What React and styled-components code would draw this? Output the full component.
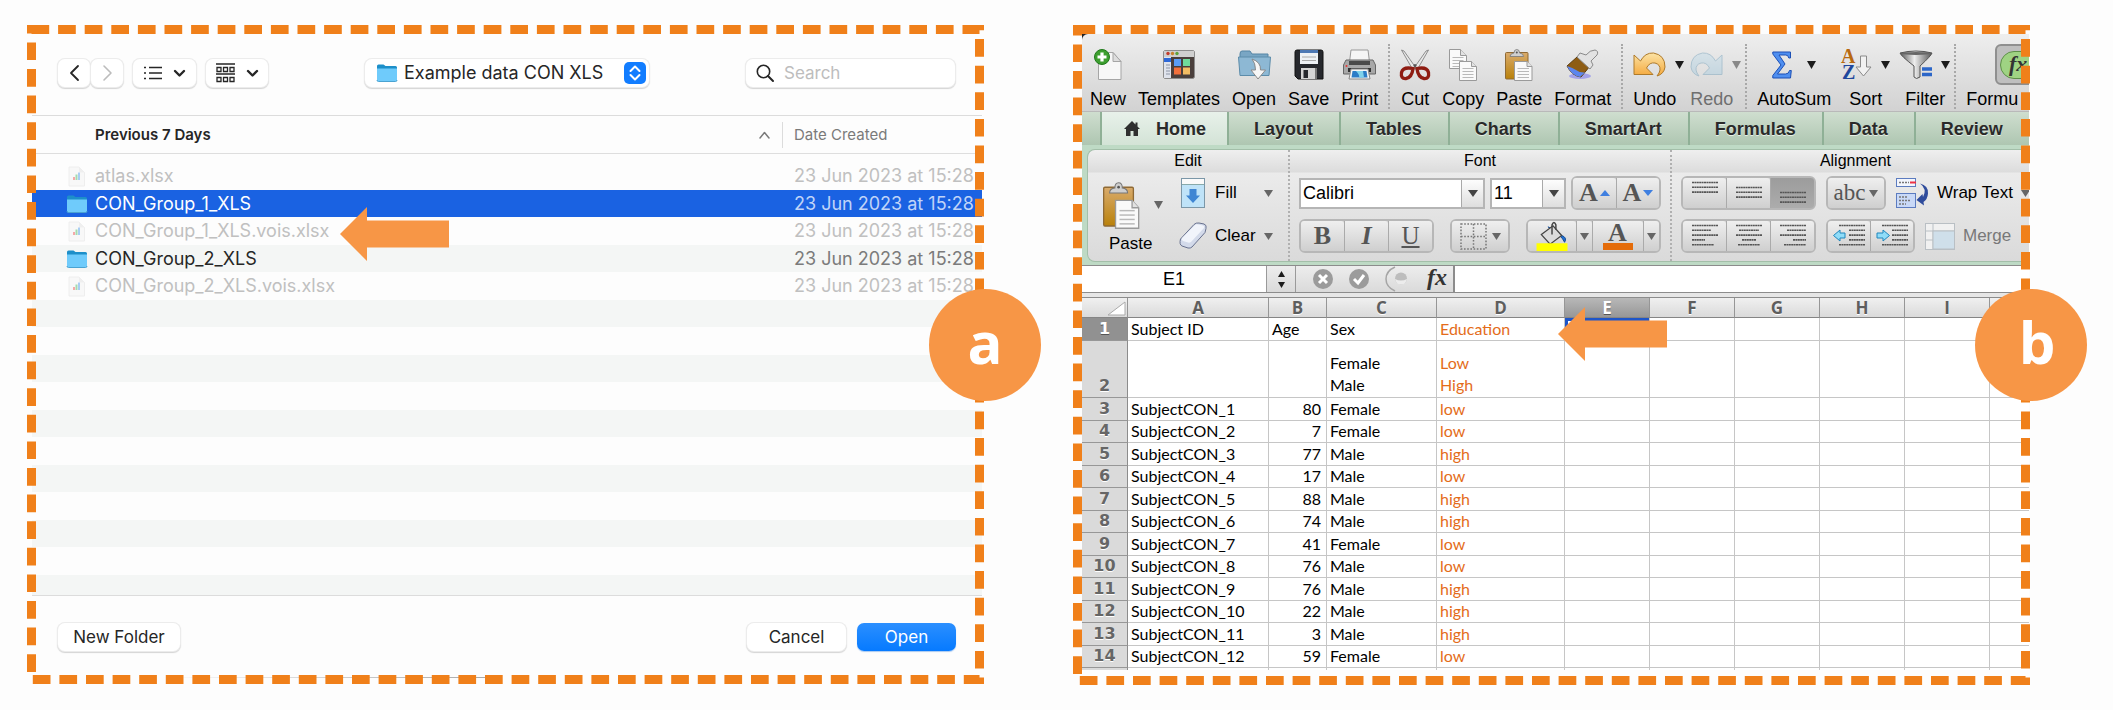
import React from 'react';
import styled, { createGlobalStyle, css } from 'styled-components';

const ORANGE = '#f0801a';
const SOFT_ORANGE = '#f79646';

const GlobalStyle = createGlobalStyle`
  *, *::before, *::after { box-sizing: border-box; }
  body { margin: 0; background: #fdfdfd; }
  button, input, select { font: inherit; color: inherit; margin: 0; padding: 0; }
  button { border: 0; background: none; }
  svg { display: block; flex: none; overflow: visible; }
`;

/* ---------- figure ---------- */

const Figure = styled.main`
  display: grid;
  grid-template-columns: minmax(0, 1fr) minmax(0, 1fr);
  align-items: start;
  gap: 89px;
  padding: 25px 83px 25px 27px;
`;

const Panel = styled.section`
  position: relative;
`;

const DashedFrame = styled.svg`
  position: absolute;
  inset: 0;
  width: 100%;
  height: 100%;
  pointer-events: none;
  rect {
    width: calc(100% - 9px);
    height: calc(100% - 9px);
    fill: none;
    stroke: ${ORANGE};
    stroke-width: 9;
    stroke-dasharray: 17.7 8.9;
  }
`;

const Badge = styled.div`
  position: absolute;
  top: 264px;
  right: -57px;
  width: 112px;
  height: 112px;
  padding-left: ${p => p.$shift || 0}px;
  border-radius: 50%;
  background: ${SOFT_ORANGE};
  color: #fff;
  font: 700 58px/106px "Open Sans", sans-serif;
  text-align: center;
`;

const Pointer = styled.svg`
  position: absolute;
  left: ${p => p.$x}px;
  top: ${p => p.$y}px;
  fill: ${SOFT_ORANGE};
`;

const Frame = () => (
  <DashedFrame aria-hidden="true"><rect x="4.5" y="4.5" /></DashedFrame>
);

const Arrow = ({ x, y }) => (
  <Pointer $x={x} $y={y} width="109" height="54" viewBox="0 0 109 54" aria-hidden="true">
    <path d="M0 27 27 0V13.500H109V40.500H27V54z" />
  </Pointer>
);

/* ---------- open dialog ---------- */

const Dialog = styled.div`
  padding: 9px 2px 9px 5px;
  background: linear-gradient(90deg, transparent 14%, #a8a8a8 48%, transparent 49%) 0 calc(100% - 6px) / 100% 1px no-repeat;
  font: 17px/24px Inter, sans-serif;
  color: #262626;
`;

const DialogBar = styled.div`
  display: flex;
  align-items: center;
  gap: 10px;
  padding: 25px 27px 28px 26px;
  border-bottom: 1px solid #dcdcdc;
`;

const softControl = css`
  height: 28px;
  border-radius: 7px;
  background: #fff;
  box-shadow: 0 0 0 1px #ececec, 0 1px 1px 1px #d4d4d4;
`;

const SoftButton = styled.button`
  ${softControl}
  display: flex;
  align-items: center;
  justify-content: center;
  gap: 12px;
  min-width: ${p => p.$w}px;
  ${p => p.$primary && css`
    color: #fff;
    background: linear-gradient(#2b8fff, #067aff);
    box-shadow: 0 1px 1px #a9c9f0;
  `}
`;

const NavPair = styled.div`
  display: flex;
  gap: 1px;
`;

const Spacer = styled.div`
  flex: 1;
`;

const FolderPicker = styled.label`
  ${softControl}
  display: flex;
  align-items: center;
  width: 284px;
  padding: 0 3px 0 12px;
  gap: 7px;
  select { flex: 1; min-width: 0; border: 0; background: none; appearance: none; font-size: 18px; }
`;

const SearchBox = styled.label`
  ${softControl}
  display: flex;
  align-items: center;
  gap: 10px;
  width: 209px;
  padding: 0 10px;
  input { flex: 1; min-width: 0; border: 0; outline: 0; background: none; font-size: 17px; }
  input::placeholder { color: #bdbdbd; opacity: 1; }
`;

const FileTable = styled.table`
  width: 100%;
  table-layout: fixed;
  border-spacing: 0;
  border-bottom: 1px solid #dcdcdc;
  text-align: left;
  td, th { padding: 0; }
  td { font-size: 18px; }
  th:last-child, td:last-child { width: 199px; padding-left: 11px; white-space: nowrap; }
  tbody::before { content: ''; display: block; height: 8px; }
`;

const HeadCell = styled.th`
  height: 38px;
  border-bottom: 1px solid #dedede;
  font-size: 15px;
  font-weight: ${p => (p.$muted ? 400 : 600)};
  color: ${p => (p.$muted ? '#7a7a7a' : '#262626')};
`;

const HeadSplit = styled.div`
  display: flex;
  align-items: center;
  justify-content: space-between;
  height: 26px;
  padding: 0 12px 0 63px;
  border-right: 1px solid #dcdcdc;
`;

const FileRow = styled.tr`
  height: ${p => p.$h}px;
  background: ${p => (p.$selected ? '#1a62e2' : p.$striped ? '#f4f6f5' : 'transparent')};
  color: ${p => (p.$selected ? '#fff' : p.$dim ? '#c0c0c0' : '#262626')};
  td:last-child { color: ${p => (p.$selected ? '#c0d4f8' : p.$dim ? '#c0c0c0' : '#7b7b7b')}; }
`;

const FileName = styled.div`
  display: flex;
  align-items: center;
  gap: 8px;
  padding-left: 35px;
`;

const DialogFoot = styled.div`
  display: flex;
  gap: 11px;
  padding: 27px 26px 24px;
`;

const Folder = () => (
  <svg width="20" height="20" viewBox="0 0 20 20" aria-hidden="true">
    <path d="M0 3q0-1.500 1.500-1.500h5l2 1.500h10q1.500 0 1.500 1.500V8H0z" fill="#1d8fc9" />
    <path d="M0 5.500h20V17q0 1.500-1.500 1.500h-17Q0 18.500 0 17z" fill="#6fcbfb" />
    <path d="M0 17q0 1.500 1.500 1.500h17Q20 18.500 20 17" fill="none" stroke="#4aa3d2" />
  </svg>
);

const SheetFile = () => (
  <svg width="20" height="21" viewBox="0 0 20 21" aria-hidden="true">
    <path d="M2 1h10l5.500 5.500V20H2z" fill="#f8f8f8" stroke="#eee" />
    <path d="M12 1v5.500h5.500" fill="#efefef" />
    <path d="M7 14v-3" stroke="#f5a9a9" strokeWidth="2" />
    <path d="M9.500 14V8.500" stroke="#a5dcb0" strokeWidth="2" />
    <path d="M12 14V6.500" stroke="#a9cdf3" strokeWidth="2" />
  </svg>
);

const Chevron = ({ d = 'M1 1l4.500 4.500L10 1', w = 11, h = 7, color = '#262626', sw = 2.4 }) => (
  <svg width={w} height={h} viewBox={`0 0 ${w} ${h}`} fill="none" stroke={color} strokeWidth={sw} strokeLinecap="round" strokeLinejoin="round" aria-hidden="true">
    <path d={d} />
  </svg>
);

const files = [
  { name: 'atlas.xlsx', dim: true },
  { name: 'CON_Group_1_XLS', folder: true, selected: true },
  { name: 'CON_Group_1_XLS.vois.xlsx', dim: true },
  { name: 'CON_Group_2_XLS', folder: true },
  { name: 'CON_Group_2_XLS.vois.xlsx', dim: true },
];
const blankRows = [27, 28, 27, 28, 27, 28, 27, 28, 27, 28, 20];

const OpenDialog = () => (
  <Dialog>
    <DialogBar>
      <NavPair>
        <SoftButton $w={32} aria-label="Back"><Chevron d="M8 1 1 8l7 7" w={9} h={16} sw={1.8} /></SoftButton>
        <SoftButton $w={32} aria-label="Forward"><Chevron d="M1 1l7 7-7 7" w={9} h={16} sw={1.6} color="#bcbcbc" /></SoftButton>
      </NavPair>
      <SoftButton $w={63} aria-label="List view">
        <svg width="18" height="14" viewBox="0 0 18 14" stroke="#262626" strokeWidth="1.500" aria-hidden="true">
          <path d="M0 1.500h2M0 7h2M0 12.500h2M5 1.500h13M5 7h13M5 12.500h13" />
        </svg>
        <Chevron />
      </SoftButton>
      <SoftButton $w={62} aria-label="Group by">
        <svg width="19" height="20" viewBox="0 0 19 20" fill="none" stroke="#262626" strokeWidth="1.300" aria-hidden="true">
          <path d="M0 1h19M0 11h19" />
          <path d="M1 4.500h4v4H1zM7.500 4.500h4v4h-4zM14 4.500h4v4h-4zM1 14.500h4v4H1zM7.500 14.500h4v4h-4zM14 14.500h4v4h-4z" />
        </svg>
        <Chevron />
      </SoftButton>
      <Spacer />
      <FolderPicker>
        <Folder />
        <select aria-label="Folder" defaultValue="x"><option value="x">Example data CON XLS</option></select>
        <svg width="22" height="22" viewBox="0 0 22 22" aria-hidden="true">
          <rect width="22" height="22" rx="5" fill="#127dff" />
          <path d="M6.500 9 11 4.500 15.500 9M6.500 13l4.500 4.500L15.500 13" fill="none" stroke="#fff" strokeWidth="2" strokeLinecap="round" strokeLinejoin="round" />
        </svg>
      </FolderPicker>
      <Spacer />
      <SearchBox>
        <svg width="18" height="18" viewBox="0 0 18 18" fill="none" stroke="#262626" strokeWidth="1.600" strokeLinecap="round" aria-hidden="true">
          <circle cx="7.500" cy="7.500" r="6.200" /><path d="M12 12l5 5" strokeWidth="2" />
        </svg>
        <input aria-label="Search" placeholder="Search" />
      </SearchBox>
    </DialogBar>
    <FileTable>
      <thead>
        <tr>
          <HeadCell scope="col">
            <HeadSplit>Previous 7 Days<Chevron d="M1 7 5.500 1.500 10 7" h={8} sw={1.5} color="#7a7a7a" /></HeadSplit>
          </HeadCell>
          <HeadCell scope="col" $muted>Date Created</HeadCell>
        </tr>
      </thead>
      <tbody>
        {files.map((f, i) => (
          <FileRow key={f.name} $h={i % 2 ? 27 : 28} $striped={i % 2 === 1} $selected={f.selected} $dim={f.dim}>
            <td><FileName>{f.folder ? <Folder /> : <SheetFile />}{f.name}</FileName></td>
            <td>23 Jun 2023 at 15:28</td>
          </FileRow>
        ))}
        {blankRows.map((h, i) => (
          <FileRow key={i} $h={h} $striped={i % 2 === 0}><td /><td /></FileRow>
        ))}
      </tbody>
    </FileTable>
    <DialogFoot>
      <SoftButton $w={122}>New Folder</SoftButton>
      <Spacer />
      <SoftButton $w={99}>Cancel</SoftButton>
      <SoftButton $w={99} $primary>Open</SoftButton>
    </DialogFoot>
  </Dialog>
);

/* ---------- spreadsheet window ---------- */

const WindowPad = styled.div`
  padding: 9px 1px 15px 9px;
`;

const Window = styled.div`
  overflow: hidden;
  background: #222;
  color: #000;
  font: 18px/24px "Liberation Sans", Arial, sans-serif;
`;

const Toolbar = styled.div`
  display: flex;
  padding: 10px 0 0 8px;
  height: 78px;
  border-bottom: 1px solid #b9b9b9;
  border-top-left-radius: 6px;
  background: linear-gradient(#eeeeee, #d2d2d2);
`;

const ToolGroup = styled.div`
  display: flex;
  flex: none;
  align-items: flex-start;
  gap: ${p => p.$gap}px;
  padding-right: ${p => (p.$tight ? 4 : 10)}px;
  & + & {
    padding-left: 10px;
    border-left: 2px dotted #a8a8a8;
  }
  height: 65px;
`;

const Tool = styled.button`
  display: flex;
  flex-direction: column;
  align-items: ${p => (p.$start ? 'flex-start' : 'center')};
  gap: 2px;
  color: ${p => (p.$off ? '#6f6f6f' : '#000')};
  line-height: 24px;
  white-space: nowrap;
`;

const ToolIcon = styled.span`
  display: flex;
  align-items: center;
  gap: ${p => p.$gap || 9}px;
  height: 41px;
  opacity: ${p => (p.$off ? 0.45 : 1)};
`;

const FormulaTile = styled.span`
  display: flex;
  align-items: center;
  justify-content: center;
  width: 56px;
  height: 41px;
  margin-left: 29px;
  border: 2px solid #8f8f8f;
  border-radius: 6px;
  background: #bfbfbf;
`;

const Tabs = styled.nav`
  display: flex;
  height: 33px;
  padding-left: 18px;
  background: linear-gradient(#cfdecf, #aec6b1);
`;

const Tab = styled.a`
  display: flex;
  flex: none;
  align-items: center;
  gap: 16px;
  padding: 0 26px 0 25px;
  border-left: 2px solid #8fb096;
  color: #2a2a2a;
  font-weight: 700;
  text-decoration: none;
  text-shadow: 0 1px 0 #e6efe6;
  ${p => p.$active && css`
    padding: 0 21px 0 22px;
    background: linear-gradient(#e8f1ea, #d3e3d6);
  `}
`;

const RibbonFrame = styled.div`
  padding: 4px 0 3px 5px;
  background: #bedac5;
`;

const Ribbon = styled.div`
  display: flex;
  height: 113px;
  border: 1px solid #a3bfa9;
  border-right: 0;
  border-radius: 8px 0 0 8px;
  background: linear-gradient(#efefef, #dcdcdc 22px, #ebebeb 23px, #dadada);
  font-size: 17px;
`;

const RibbonGroup = styled.section`
  flex: none;
  padding: 0 ${p => p.$pad}px;
  & + & { border-left: 2px dotted #b0b0b0; }
  h3 { margin: 0; font: 16px/21px "Liberation Sans", Arial, sans-serif; text-align: center; }
`;

const RibbonRows = styled.div`
  display: flex;
  flex-direction: column;
  gap: 9px;
  padding-top: 5px;
`;

const RibbonRow = styled.div`
  display: flex;
  align-items: center;
  justify-content: ${p => (p.$spread ? 'space-between' : 'flex-start')};
  gap: ${p => p.$gap || 0}px;
  height: 34px;
`;

const EditBody = styled.div`
  display: flex;
  gap: 16px;
`;

const BigTool = styled.button`
  display: flex;
  flex-direction: column;
  align-items: flex-start;
  padding-top: 7px;
  line-height: 24px;
  span { padding-left: 6px; }
`;

const BigIcon = styled.div`
  display: flex;
  align-items: center;
  gap: 14px;
  height: 54px;
`;

const LineTool = styled.button`
  display: flex;
  align-items: center;
  gap: 8px;
  white-space: nowrap;
  color: ${p => (p.$off ? '#787878' : '#000')};
`;

const LineLabel = styled.span`
  min-width: ${p => p.$min || 0}px;
  text-align: left;
`;

const Picker = styled.label`
  display: flex;
  position: relative;
  width: ${p => p.$w}px;
  height: 31px;
  border: 2px solid #b5b5b5;
  background: #fff;
  font-size: 18px;
  select { width: 100%; padding: 0 2px; border: 0; background: none; appearance: none; }
  span {
    position: absolute;
    inset: 0 0 0 auto;
    display: flex;
    align-items: center;
    justify-content: center;
    width: 22px;
    border-left: 1px solid #a9a9a9;
    background: linear-gradient(#fdfdfd, #dedede);
    pointer-events: none;
  }
`;

const Cluster = styled.div`
  display: flex;
  flex: none;
  height: 34px;
  border: 2px solid #b7b7b7;
  border-radius: 6px;
  background: #cfcfcf;
`;

const ClusterButton = styled.button`
  display: flex;
  align-items: center;
  justify-content: center;
  gap: ${p => p.$gap || 5}px;
  width: ${p => p.$w}px;
  border-radius: 3px;
  background: ${p => (p.$pressed ? 'linear-gradient(#9c9c9c, #acacac)' : 'linear-gradient(#efefef, #cfcfcf)')};
  color: #555;
  font: ${p => p.$font || '700 26px'}/30px "Liberation Serif", serif;
  font-style: ${p => (p.$italic ? 'italic' : 'normal')};
  text-decoration: ${p => (p.$under ? 'underline' : 'none')};
  & + & { border-left: 1px solid #aaa; border-top-left-radius: 0; border-bottom-left-radius: 0; }
`;

const Caret = ({ w = 9, h = 8, color = '#1c1c1c', up }) => (
  <svg width={w} height={h} viewBox="0 0 10 8" preserveAspectRatio="none" fill={color} aria-hidden="true">
    <path d={up ? 'M0 8h10L5 0z' : 'M0 0h10L5 8z'} />
  </svg>
);

const Home = () => (
  <svg width="16" height="15" viewBox="0 0 16 15" fill="#2f2f2f" aria-hidden="true">
    <path d="M8 0 0 8h2v7h4.500v-5h3v5H14V8h2l-2.500-2.500V1.500h-2v2z" />
  </svg>
);

const NewIcon = () => (
  <svg width="28" height="32" viewBox="0 0 28 32" aria-hidden="true">
    <path d="M4.500 3.500H19l8 9V30.500H4.500z" fill="#f7f7f7" stroke="#a5a5a5" />
    <path d="M19 3.500v9h8z" fill="#ddd" stroke="#a5a5a5" />
    <circle cx="8" cy="8" r="7.500" fill="#3d9e2f" stroke="#1f7a1a" />
    <path d="M8 3.500v9M3.500 8h9" stroke="#fff" strokeWidth="3.200" />
  </svg>
);

const TemplatesIcon = () => (
  <svg width="32" height="29" viewBox="0 0 32 29" aria-hidden="true">
    <rect x=".5" y=".5" width="31" height="28" rx="2" fill="#4a3f3c" stroke="#8c8c8c" />
    <rect x="1" y="1" width="30" height="6" fill="#cfcfcf" />
    <circle cx="5" cy="3.500" r="1.700" fill="#c33b2c" /><circle cx="9.500" cy="3.500" r="1.700" fill="#c9822b" /><circle cx="14" cy="3.500" r="1.700" fill="#5ea33b" />
    <rect x="1" y="7" width="7" height="21" fill="#dfe3ec" /><rect x="1" y="8" width="7" height="4" fill="#2d68d8" />
    <path d="M3 15h4M3 18h4M3 21h4M3 24h4" stroke="#8d95a6" />
    <rect x="11" y="9" width="7" height="7" fill="#5a9cf5" /><rect x="20" y="9" width="7" height="7" fill="#6edb9b" />
    <rect x="11" y="17.500" width="7" height="7" fill="#f2703c" /><rect x="20" y="17.500" width="7" height="7" fill="#f3bd63" />
  </svg>
);

const OpenIcon = () => (
  <svg width="33" height="32" viewBox="0 0 33 32" aria-hidden="true">
    <path d="M2 5q0-3 2-3h8l2 3h16v5H2z" fill="#79a6c4" stroke="#5585a5" />
    <path d="M.5 8h32l-1.500 18.500h-29z" fill="#8db8d4" stroke="#5c8caa" />
    <path d="M14 10q9 3 8.500 11h5L20 30l-7-9h4.500q0-7-3.500-11z" fill="#f6f6f6" stroke="#8a8a8a" />
  </svg>
);

const SaveIcon = () => (
  <svg width="30" height="31" viewBox="0 0 30 31" aria-hidden="true">
    <path d="M1 3q0-2 2-2h24q2 0 2 2v27H4l-3-3z" fill="#26282d" stroke="#111" />
    <rect x="6" y="1" width="18" height="14" fill="#eef1f5" /><rect x="6" y="1" width="18" height="3" fill="#4d78b4" />
    <path d="M8 8h14M8 11.500h14" stroke="#aaa" />
    <rect x="7" y="19" width="15" height="11" fill="#d5d5d5" /><rect x="9.500" y="21" width="4.500" height="8" fill="#26282d" />
    <path d="M22 19v11" stroke="#777" strokeWidth="2" />
  </svg>
);

const PrintIcon = () => (
  <svg width="33" height="31" viewBox="0 0 33 31" aria-hidden="true">
    <path d="M8 1h17l1.500 12h-20z" fill="#f5f5f5" stroke="#999" />
    <path d="M3 11h27l2.500 5v9h-32v-9z" fill="#a8a8a8" stroke="#666" />
    <rect x="6" y="12" width="21" height="4" fill="#4a4a4a" />
    <rect x="5" y="19" width="23" height="4" fill="#333" />
    <path d="M8 20h17l2 10H6z" fill="#f5f5f5" stroke="#888" />
    <path d="M9.500 22h14l1 6.500h-16z" fill="#2b7cc7" /><path d="M13 22q4 4 3 6.500h5l-1-6.500z" fill="#7fd2ea" />
    <circle cx="3.500" cy="17" r="1" fill="#e33" />
  </svg>
);

const CutIcon = () => (
  <svg width="30" height="32" viewBox="0 0 30 32" fill="none" aria-hidden="true">
    <path d="M1.500 1 4 2l12 17-3 2zM28.500 1 26 2 14 19l3 2z" fill="#e8e8e8" stroke="#8d8d8d" />
    <path d="M13 19.500q-10-2-11.500 4Q.5 30 6 29.500 12 28.500 13 19.500zM17 19.500q10-2 11.500 4 1 6.500-4.500 6Q18 28.500 17 19.500z" stroke="#8e1c12" strokeWidth="3.300" />
    <circle cx="15" cy="16.500" r="1.500" fill="#555" />
  </svg>
);

const PageShape = ({ x, y, w, h, c }) => (
  <g transform={`translate(${x} ${y})`}>
    <path d={`M0 0h${w - c}l${c} ${c}V${h}H0z`} fill="#fafafa" stroke="#9a9a9a" />
    <path d={`M${w - c} 0v${c}h${c}`} fill="#e2e2e2" stroke="#9a9a9a" />
    {[0, 1, 2, 3].map(i => (
      <path key={i} d={`M3 ${c + 2 + i * 3}h${w - 6}`} stroke="#b9b9b9" />
    ))}
  </g>
);

const CopyIcon = () => (
  <svg width="28" height="32" viewBox="0 0 28 32" aria-hidden="true">
    <PageShape x={0.5} y={0.5} w={17} h={19} c={6} /><PageShape x={10.5} y={12.5} w={17} h={19} c={5} />
  </svg>
);

const PasteArt = ({ w, h }) => (
  <svg width={w} height={h} viewBox="0 0 28 32" preserveAspectRatio="none" aria-hidden="true">
    <defs>
      <linearGradient id="board" x2="0" y2="1"><stop stopColor="#d9ab6c" /><stop offset="1" stopColor="#b9810a" /></linearGradient>
    </defs>
    <rect x=".5" y="3.500" width="22.500" height="26.500" rx="1" fill="url(#board)" stroke="#8f6a35" />
    <path d="M5 7.500q0-3 4-3.500 0-3.500 2.800-3.500T14.600 4q4 .5 4 3.500z" fill="#cfcfcf" stroke="#777" strokeWidth=".8" />
    <circle cx="11.800" cy="3.500" r="1" fill="#555" />
    <PageShape x={9.5} y={12.5} w={17.5} h={19} c={5} />
  </svg>
);

const FormatIcon = () => (
  <svg width="34" height="31" viewBox="0 0 34 31" aria-hidden="true">
    <ellipse cx="14" cy="27" rx="11" ry="3" fill="#7b7bf0" opacity=".6" />
    <path d="M11 8 24 17 15 28Q6 27 1 17z" fill="#8e5d14" stroke="#5f3f10" />
    <path d="M1 17q6 2 9 4 4 3 9 2.500L14 28Q5 26 1 17z" fill="#5c86ee" />
    <path d="M11 8l3-4 6 2q4-5 9-5 4 1 2 5l-6 6 2 4-3 4z" fill="#e2e2e2" stroke="#8a8a8a" />
  </svg>
);

const TurnIcon = ({ flip, a, b, stroke }) => (
  <svg width="33" height="25" viewBox="0 0 33 25" aria-hidden="true">
    <defs>
      <linearGradient id={flip ? 'turnR' : 'turnU'} x2="0" y2="1"><stop stopColor={a} /><stop offset="1" stopColor={b} /></linearGradient>
    </defs>
    <path transform={flip ? 'translate(33 0) scale(-1 1)' : undefined}
      d="M1 3v19.500h19l-6.500-6.500q3-6 8.500-5 5.500 1.500 5 7-.5 3-3 6 7-2 8-9 0-12-11.500-14Q12 .5 7.500 9z"
      fill={`url(#${flip ? 'turnR' : 'turnU'})`} stroke={stroke} />
  </svg>
);

const SigmaIcon = () => (
  <svg width="20" height="28" viewBox="0 0 20 28" aria-hidden="true">
    <path d="M.8 1h17.700v6h-1.700q-.5-3-3-3H7l6 9-7.500 10h8q3.500 0 4-3.500h1.800L18.500 27H.8v-2.500L9 14 .8 3z" fill="#4f8ff0" stroke="#1c4fb5" />
  </svg>
);

const LetterMark = styled.text`
  font: 700 ${p => p.$size}px "Liberation Serif", serif;
  font-style: ${p => (p.$italic ? 'italic' : 'normal')};
`;

const SortIcon = () => (
  <svg width="31" height="32" viewBox="0 0 31 32" aria-hidden="true">
    <LetterMark $size={20} x="0" y="14" fill="#b8690f">A</LetterMark>
    <LetterMark $size={20} x="1" y="30" fill="#1f479c">Z</LetterMark>
    <path d="M19.500 7h6v11H30l-7.500 9-7.500-9h4.500z" fill="#f2f2f2" stroke="#8a8a8a" />
  </svg>
);

const FilterIcon = () => (
  <svg width="32" height="28" viewBox="0 0 32 28" aria-hidden="true">
    <defs>
      <linearGradient id="funnel"><stop stopColor="#555" /><stop offset=".45" stopColor="#eee" /><stop offset="1" stopColor="#555" /></linearGradient>
    </defs>
    <path d="M0 2q16-4 32 0-1 3-12 13v11q-4 3-6 0V15Q1 5 0 2z" fill="url(#funnel)" stroke="#555" />
    <ellipse cx="16" cy="2.500" rx="14" ry="1.500" fill="#666" />
    <path d="M22 18h10M22 23.500h10" stroke="#2c66c8" strokeWidth="3.400" />
  </svg>
);

const tools = [
  { gap: 12, items: [
    { label: 'New', icon: <NewIcon /> },
    { label: 'Templates', icon: <TemplatesIcon /> },
    { label: 'Open', icon: <OpenIcon /> },
    { label: 'Save', icon: <SaveIcon /> },
    { label: 'Print', icon: <PrintIcon /> },
  ] },
  { gap: 12, items: [
    { label: 'Cut', icon: <CutIcon /> },
    { label: 'Copy', icon: <CopyIcon /> },
    { label: 'Paste', icon: <PasteArt w={28} h={32} /> },
    { label: 'Format', icon: <FormatIcon /> },
  ] },
  { gap: 6, tight: true, items: [
    { label: 'Undo', start: true, menu: true, icon: <TurnIcon a="#fbe3a6" b="#f5a93c" stroke="#ae7a2a" /> },
    { label: 'Redo', start: true, menu: true, off: true, icon: <TurnIcon flip a="#c3dcea" b="#a4cbe0" stroke="#6c9cb8" /> },
  ] },
  { gap: 10, tight: true, items: [
    { label: 'AutoSum', menu: true, wide: 15, icon: <SigmaIcon /> },
    { label: 'Sort', menu: true, icon: <SortIcon /> },
    { label: 'Filter', menu: true, icon: <FilterIcon /> },
  ] },
];

const Lines = ({ rows, top = 0 }) => (
  <svg width="26" height="24" viewBox="0 0 26 24" stroke="#555" strokeWidth="1.600" strokeDasharray="2 .4" aria-hidden="true">
    {rows.map(([x, w], i) => <path key={i} d={`M${x} ${top + 1.5 + i * 4.8}h${w}`} />)}
  </svg>
);

const IndentIcon = ({ right }) => (
  <svg width="32" height="24" viewBox="0 0 32 24" aria-hidden="true">
    <g stroke="#555" strokeWidth="1.600" strokeDasharray="2 .4">
      <path d="M6 1.500h26M16 6.300h16M16 11.100h16M16 15.900h16M6 20.700h26" />
    </g>
    <path d={right ? 'M13.500 11.500 7 6v3H1v5h6v3z' : 'M.5 11.500 7 6v3h5v5H7v3z'} fill="#8fdcf8" stroke="#1f86bd" />
  </svg>
);

const BorderIcon = () => (
  <svg width="27" height="27" viewBox="0 0 27 27" fill="none" stroke="#777" strokeWidth="1.500" strokeDasharray="1.600 1.600" aria-hidden="true">
    <path d="M1 1h25v25H1zM13.500 1v25M1 13.500h25" />
  </svg>
);

const BucketIcon = () => (
  <svg width="33" height="30" viewBox="0 0 33 31" aria-hidden="true">
    <path d="M12 6l14 9q6 2 3 7-4-8-9-8z" fill="#1f6fd0" stroke="#124a94" />
    <path d="M5 14 17 5l9 10-12 9z" fill="#dcdcdc" stroke="#444" strokeWidth="1.300" />
    <path d="M16 14V4q2-5 4 0v5" fill="none" stroke="#444" strokeWidth="1.500" />
    <rect x="0" y="23" width="32" height="8" fill="#ff0" />
  </svg>
);

const FontColourIcon = () => (
  <svg width="30" height="30" viewBox="0 0 30 30" aria-hidden="true">
    <LetterMark $size={26} x="5" y="20" fill="#555">A</LetterMark>
    <rect x="0" y="22" width="30" height="7" fill="#e46c0a" />
  </svg>
);

const FillIcon = () => (
  <svg width="28" height="30" viewBox="0 0 28 30" aria-hidden="true">
    <rect x="2.500" y=".5" width="23" height="29" fill="#bfe3f8" stroke="#7b97a8" />
    <rect x="3" y="1" width="22" height="5" fill="#fafafa" /><path d="M3 6.500h22" stroke="#8aa" />
    <path d="M10.500 11h7v6.500H21L14 25l-7-7.500h3.500z" fill="#3f86d3" />
  </svg>
);

const EraserIcon = () => (
  <svg width="28" height="28" viewBox="0 0 28 28" aria-hidden="true">
    <path d="M1.500 17 15 2.500q2-2 5-1.500l5 1q3 1 2 4.500l-1 4L13 25q-1.500 1.500-4 1l-6-2q-3-1.500-1.500-7z" fill="#d3daea" stroke="#69728f" />
    <path d="M3 16 16 3q1-1 3-.6l5 1.100q2 .6 1 2.500L12 20q-1.500 1-3 .5l-5-1.500q-2-1-1-3z" fill="#f1f4fb" />
  </svg>
);

const WrapIcon = () => (
  <svg width="33" height="30" viewBox="0 0 33 30" aria-hidden="true">
    <rect x=".5" y=".5" width="19" height="8" fill="#f3f6fd" stroke="#5c7cc0" /><path d="M3 4.500h10" stroke="#777" strokeWidth="1.500" strokeDasharray="2 1" /><path d="M14 4.500h6" stroke="#e34" strokeWidth="2" />
    <rect x=".5" y="15.500" width="19" height="14" fill="#c9d9f7" stroke="#5c7cc0" />
    <path d="M3 19h9M3 22.500h12M3 26h7" stroke="#777" strokeWidth="1.500" strokeDasharray="2 1" />
    <path d="M24 5.500q8.500 2 8 10-.5 6-4.500 8.500l.5 3.500L20.500 22l6-6 .5 3q4.500-8-3-13.500z" fill="#2f4c9c" />
  </svg>
);

const MergeIcon = () => (
  <svg width="30" height="27" viewBox="0 0 30 27" fill="#f1f1f1" stroke="#b9bfc4" aria-hidden="true">
    <rect x=".5" y=".5" width="29" height="26" /><path d="M8 1v26M1 8h29M1 17h7" /><rect x="8" y="8" width="21.500" height="18" fill="#cfdfea" />
  </svg>
);

const FormulaBar = styled.div`
  display: flex;
  height: 28px;
  border-top: 1px solid #8c8c8c;
  border-bottom: 1px solid #8c8c8c;
  background: linear-gradient(#ededed, #dadada);
  input { min-width: 0; border: 0; outline: 0; background: #fff; }
`;

const NameBox = styled.input`
  width: 184px;
  text-align: center;
`;

const Stepper = styled.button`
  display: flex;
  flex-direction: column;
  align-items: center;
  justify-content: center;
  gap: 5px;
  width: 30px;
  border-left: 1px solid #9a9a9a;
  border-right: 1px solid #9a9a9a;
`;

const FormulaTools = styled.div`
  display: flex;
  align-items: center;
  gap: 16px;
  width: 159px;
  padding-left: 17px;
  border-right: 2px solid #8c8c8c;
  button { display: flex; }
`;

const FormulaInput = styled.input`
  flex: 1;
`;

const SheetArea = styled.div`
  overflow: hidden;
  padding-top: 4px;
  background: #e6e6e6;
`;

const Sheet = styled.table`
  width: 993px;
  table-layout: fixed;
  border-spacing: 0;
  border-top: 1px solid #8c8c8c;
  background: #fff;
  font: 16px/20px Lato, sans-serif;
  th, td { padding: 0; white-space: nowrap; }
`;

const ColumnHead = styled.th`
  height: 20px;
  border-right: 1px solid #969696;
  border-bottom: 1px solid #858585;
  background: ${p => (p.$on ? 'linear-gradient(#b8b8b8, #979797)' : 'linear-gradient(#f0f0f0, #dadada)')};
  color: ${p => (p.$on ? '#fff' : '#5e5e5e')};
  font: 700 17px/19px "Open Sans", sans-serif;
  text-shadow: 0 1px 0 ${p => (p.$on ? '#555' : '#fff')};
`;

const RowHead = styled.th`
  && { padding-bottom: 1px; }
  border-right: 1px solid #8c8c8c;
  border-bottom: 1px solid #979797;
  background: ${p => (p.$on ? '#919191' : '#dadada')};
  color: ${p => (p.$on ? '#fff' : '#666')};
  font: 700 16px/20px "DejaVu Sans", sans-serif;
  text-shadow: 0 1px 0 ${p => (p.$on ? '#555' : '#fff')};
  vertical-align: bottom;
`;

const Row = styled.tr`
  height: ${p => p.$h}px;
`;

const Cell = styled.td`
  && { padding: 0 ${p => (p.$num ? 5 : 3)}px 1px; }
  border-right: 1px solid #c6c6c6;
  border-bottom: 1px solid #c6c6c6;
  color: ${p => (p.$accent ? '#e46c1a' : '#000')};
  line-height: ${p => (p.$tall ? 22 : 20)}px;
  text-align: ${p => (p.$num ? 'right' : 'left')};
  vertical-align: bottom;
  ${p => p.$cursor && 'box-shadow: inset 0 0 0 3px #1e55c8;'}
`;

const EdgeRow = styled.tr`
  height: 2px;
  && th, && td { padding: 0; border-bottom: 0; }
`;

const columns = [['A', 141], ['B', 58], ['C', 110], ['D', 128], ['E', 85], ['F', 85], ['G', 85], ['H', 85], ['I', 85], ['J', 85]];

const subjects = [
  [80, 'Female', 'low'], [7, 'Female', 'low'], [77, 'Male', 'high'], [17, 'Male', 'low'],
  [88, 'Male', 'high'], [74, 'Male', 'high'], [41, 'Female', 'low'], [76, 'Male', 'low'],
  [76, 'Male', 'high'], [22, 'Male', 'high'], [3, 'Male', 'high'], [59, 'Female', 'low'],
];

const sheetRows = [
  { h: 23, cells: ['Subject ID', 'Age', 'Sex', 'Education'] },
  { h: 57, cells: ['', '', <>Female<br />Male</>, <>Low<br />High</>] },
  ...subjects.map(([age, sex, edu], i) => ({ h: i % 2 ? 22 : 23, cells: [`SubjectCON_${i + 1}`, age, sex, edu] })),
];

const Spreadsheet = () => (
  <WindowPad>
    <Window>
      <Toolbar>
        {tools.map((g, i) => (
          <ToolGroup key={i} $gap={g.gap} $tight={g.tight}>
            {g.items.map(t => (
              <Tool key={t.label} $start={t.start} $off={t.off}>
                <ToolIcon $off={t.off} $gap={t.wide}>{t.icon}{t.menu && <Caret />}</ToolIcon>
                {t.label}
              </Tool>
            ))}
          </ToolGroup>
        ))}
        <ToolGroup>
          <Tool $start>
            <FormulaTile>
              <svg width="46" height="28" viewBox="0 0 46 28" aria-hidden="true">
                <rect x=".5" y=".5" width="45" height="27" rx="13.500" fill="#9fd383" stroke="#5d8f48" />
                <LetterMark $size={22} $italic x="9" y="20" fill="#333">fx</LetterMark>
              </svg>
            </FormulaTile>
            Formu
          </Tool>
        </ToolGroup>
      </Toolbar>
      <Tabs>
        <Tab href="#home" $active><Home />Home</Tab>
        {['Layout', 'Tables', 'Charts', 'SmartArt', 'Formulas', 'Data', 'Review'].map(t => (
          <Tab key={t} href={`#${t.toLowerCase()}`}>{t}</Tab>
        ))}
      </Tabs>
      <RibbonFrame>
        <Ribbon>
          <RibbonGroup $pad={15}>
            <h3>Edit</h3>
            <EditBody>
              <BigTool>
                <BigIcon><PasteArt w={37} h={47} /><Caret color="#666" /></BigIcon>
                <span>Paste</span>
              </BigTool>
              <RibbonRows>
                <RibbonRow><LineTool><FillIcon /><LineLabel $min={41}>Fill</LineLabel><Caret color="#666" h={7} /></LineTool></RibbonRow>
                <RibbonRow><LineTool><EraserIcon /><LineLabel $min={41}>Clear</LineLabel><Caret color="#666" h={7} /></LineTool></RibbonRow>
              </RibbonRows>
            </EditBody>
          </RibbonGroup>
          <RibbonGroup $pad={9}>
            <h3>Font</h3>
            <RibbonRows>
              <RibbonRow $spread>
                <Picker $w={186}>
                  <select aria-label="Font" defaultValue="c"><option value="c">Calibri</option></select>
                  <span><Caret w={10} h={7} color="#444" /></span>
                </Picker>
                <Picker $w={76}>
                  <select aria-label="Font size" defaultValue="11"><option>11</option></select>
                  <span><Caret w={10} h={7} color="#444" /></span>
                </Picker>
                <Cluster>
                  <ClusterButton $w={43} $gap={2} aria-label="Grow font">A<Caret up w={10} h={6} color="#3f7fe0" /></ClusterButton>
                  <ClusterButton $w={43} $gap={2} aria-label="Shrink font">A<Caret w={10} h={6} color="#3f7fe0" /></ClusterButton>
                </Cluster>
              </RibbonRow>
              <RibbonRow $spread $gap={16}>
                <Cluster>
                  <ClusterButton $w={43}>B</ClusterButton>
                  <ClusterButton $w={44} $italic>I</ClusterButton>
                  <ClusterButton $w={44} $under $font="400 25px">U</ClusterButton>
                </Cluster>
                <Cluster>
                  <ClusterButton $w={56} aria-label="Borders"><BorderIcon /><Caret color="#666" h={7} /></ClusterButton>
                </Cluster>
                <Cluster>
                  <ClusterButton $w={48} aria-label="Fill colour"><BucketIcon /></ClusterButton>
                  <ClusterButton $w={16} aria-label="Fill colour menu"><Caret color="#666" h={7} /></ClusterButton>
                  <ClusterButton $w={51} aria-label="Font colour"><FontColourIcon /></ClusterButton>
                  <ClusterButton $w={16} aria-label="Font colour menu"><Caret color="#666" h={7} /></ClusterButton>
                </Cluster>
              </RibbonRow>
            </RibbonRows>
          </RibbonGroup>
          <RibbonGroup $pad={9}>
            <h3>Alignment</h3>
            <RibbonRows>
              <RibbonRow $gap={10}>
                <Cluster>
                  <ClusterButton $w={43} aria-label="Top"><Lines rows={[[0, 26], [0, 26], [0, 26]]} /></ClusterButton>
                  <ClusterButton $w={44} aria-label="Middle"><Lines rows={[[0, 26], [0, 26], [0, 26]]} top={5} /></ClusterButton>
                  <ClusterButton $w={44} $pressed aria-label="Bottom"><Lines rows={[[0, 26], [0, 26], [0, 26]]} top={10} /></ClusterButton>
                </Cluster>
                <Cluster>
                  <ClusterButton $w={56} $gap={4} $font="400 23px">abc<Caret color="#666" h={7} /></ClusterButton>
                </Cluster>
                <LineTool><WrapIcon />Wrap Text<Caret color="#666" h={7} /></LineTool>
              </RibbonRow>
              <RibbonRow $gap={10}>
                <Cluster>
                  <ClusterButton $w={43} aria-label="Left"><Lines rows={[[0, 26], [0, 19], [0, 26], [0, 13], [0, 22]]} /></ClusterButton>
                  <ClusterButton $w={44} aria-label="Centre"><Lines rows={[[0, 26], [3, 20], [0, 26], [6, 14], [2, 22]]} /></ClusterButton>
                  <ClusterButton $w={44} aria-label="Right"><Lines rows={[[0, 26], [7, 19], [0, 26], [13, 13], [4, 22]]} /></ClusterButton>
                </Cluster>
                <Cluster>
                  <ClusterButton $w={42} aria-label="Decrease indent"><IndentIcon /></ClusterButton>
                  <ClusterButton $w={43} aria-label="Increase indent"><IndentIcon right /></ClusterButton>
                </Cluster>
                <LineTool $off><MergeIcon />Merge</LineTool>
              </RibbonRow>
            </RibbonRows>
          </RibbonGroup>
        </Ribbon>
      </RibbonFrame>
      <FormulaBar>
        <NameBox aria-label="Name box" defaultValue="E1" />
        <Stepper aria-label="Step"><Caret up w={7} h={6} /><Caret w={7} h={6} /></Stepper>
        <FormulaTools>
          <button aria-label="Cancel entry">
            <svg width="20" height="20" viewBox="0 0 20 20" stroke="#fff" strokeWidth="3" aria-hidden="true"><circle cx="10" cy="10" r="10" fill="#9b9b9b" stroke="none" /><path d="M6 6l8 8M14 6l-8 8" /></svg>
          </button>
          <button aria-label="Accept entry">
            <svg width="20" height="20" viewBox="0 0 20 20" fill="none" stroke="#fff" strokeWidth="3" aria-hidden="true"><circle cx="10" cy="10" r="10" fill="#9b9b9b" stroke="none" /><path d="M5 10l4 4 6-8" /></svg>
          </button>
          <button aria-label="Formula options">
            <svg width="24" height="26" viewBox="0 0 24 26" aria-hidden="true"><path d="M10 1Q1 5 1 13t9 12" fill="none" stroke="#a5a5a5" strokeWidth="1.500" /><circle cx="16" cy="12.500" r="6" fill="#bdbdbd" /><path d="M10 13q6 3 12 0-1 5.500-6 5.500T10 13z" fill="#ececec" /></svg>
          </button>
          <button aria-label="Insert function">
            <svg width="24" height="24" viewBox="0 0 24 24" aria-hidden="true"><LetterMark $size={24} $italic x="2" y="18" fill="#333">fx</LetterMark></svg>
          </button>
        </FormulaTools>
        <FormulaInput aria-label="Formula" />
      </FormulaBar>
      <SheetArea>
        <Sheet>
          <colgroup>
            <col style={{ width: 46 }} />
            {columns.map(([c, w]) => <col key={c} style={{ width: w }} />)}
          </colgroup>
          <thead>
            <tr>
              <ColumnHead aria-label="Select all">
                <svg width="44" height="16" viewBox="0 0 44 16" aria-hidden="true"><path d="M26 15 43 2v13z" fill="#fff" stroke="#aaa" /></svg>
              </ColumnHead>
              {columns.map(([c]) => <ColumnHead key={c} scope="col" $on={c === 'E'}>{c}</ColumnHead>)}
            </tr>
          </thead>
          <tbody>
            {sheetRows.map((r, i) => (
              <Row key={i} $h={r.h}>
                <RowHead scope="row" $on={i === 0}>{i + 1}</RowHead>
                {columns.map(([c], j) => (
                  <Cell key={c} $num={j === 1 && i > 1} $accent={j === 3} $tall={i === 1} $cursor={i === 0 && j === 4}>{r.cells[j]}</Cell>
                ))}
              </Row>
            ))}
            <EdgeRow>
              <RowHead />
              {columns.map(([c]) => <Cell key={c} />)}
            </EdgeRow>
          </tbody>
        </Sheet>
      </SheetArea>
    </Window>
  </WindowPad>
);

export default function App() {
  return (
    <>
      <GlobalStyle />
      <Figure>
        <Panel>
          <OpenDialog />
          <Frame />
          <Arrow x={313} y={182} />
          <Badge>a</Badge>
        </Panel>
        <Panel>
          <Spreadsheet />
          <Frame />
          <Arrow x={485} y={282} />
          <Badge $shift={12}>b</Badge>
        </Panel>
      </Figure>
    </>
  );
}
